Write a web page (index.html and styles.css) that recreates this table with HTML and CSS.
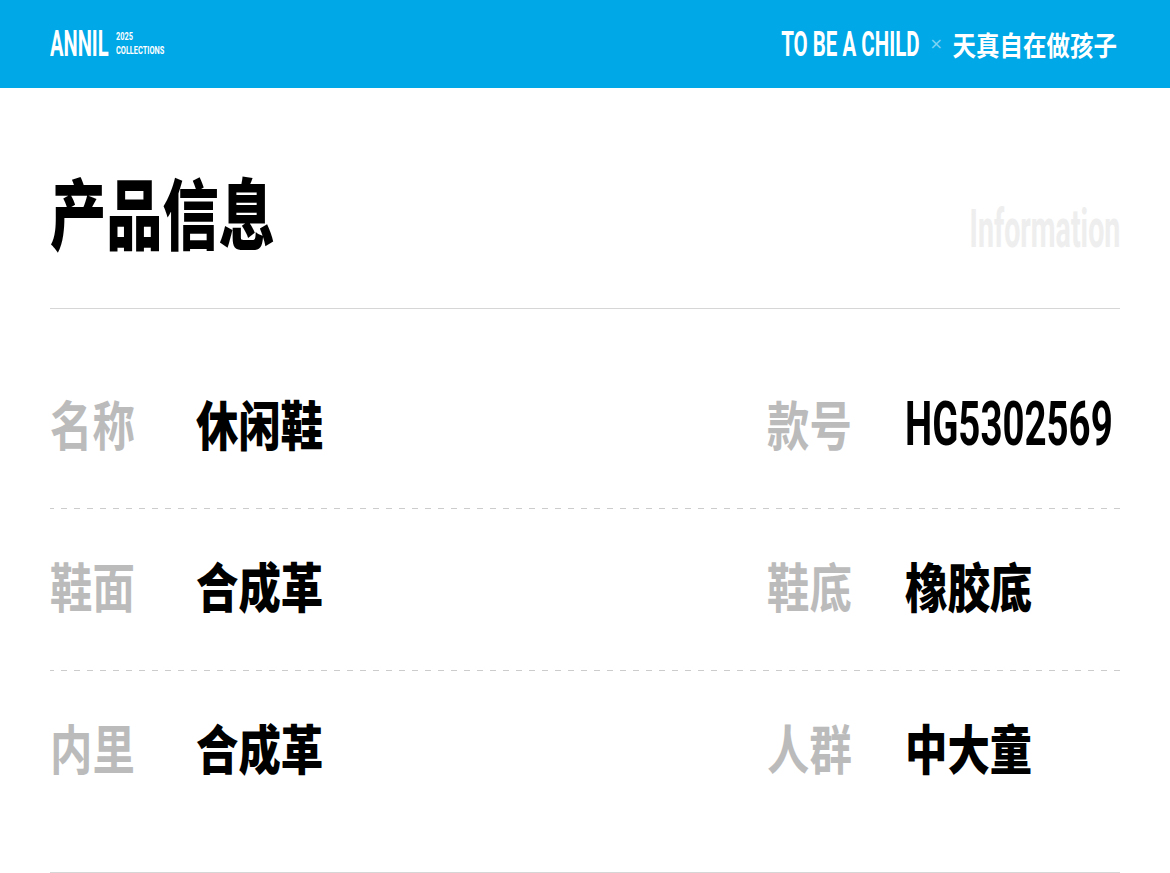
FILE: index.html
```html
<!DOCTYPE html>
<html lang="zh-CN">
<head>
<meta charset="utf-8">
<title>产品信息</title>
<link rel="stylesheet" href="styles.css">
</head>
<body>
<header class="header">
  <div class="brand">
    <span class="brand-name">ANNIL</span>
    <div class="brand-sub">
      <span class="brand-year">2025</span>
      <span class="brand-coll">COLLECTIONS</span>
    </div>
  </div>
  <div class="slogan">
    <span class="slogan-en">TO BE A CHILD</span>
    <span class="slogan-x">×</span>
    <span class="slogan-cn">天真自在做孩子</span>
  </div>
</header>
<main class="main">
  <section class="title-row">
    <h1 class="title"><span class="title-text">产品信息</span></h1>
    <span class="title-en">Information</span>
  </section>
  <section class="specs">
    <div class="row">
      <div class="cell">
        <div class="label"><span class="cjk">名称</span></div>
        <div class="value"><span class="cjk">休闲鞋</span></div>
      </div>
      <div class="cell cell-right">
        <div class="label"><span class="cjk">款号</span></div>
        <div class="value"><span class="code">HG5302569</span></div>
      </div>
    </div>
    <div class="sep"></div>
    <div class="row">
      <div class="cell">
        <div class="label"><span class="cjk">鞋面</span></div>
        <div class="value"><span class="cjk">合成革</span></div>
      </div>
      <div class="cell cell-right">
        <div class="label"><span class="cjk">鞋底</span></div>
        <div class="value"><span class="cjk">橡胶底</span></div>
      </div>
    </div>
    <div class="sep"></div>
    <div class="row">
      <div class="cell">
        <div class="label"><span class="cjk">内里</span></div>
        <div class="value"><span class="cjk">合成革</span></div>
      </div>
      <div class="cell cell-right">
        <div class="label"><span class="cjk">人群</span></div>
        <div class="value"><span class="cjk">中大童</span></div>
      </div>
    </div>
  </section>
</main>
</body>
</html>
```

FILE: styles.css
```css
* { box-sizing: border-box; }
html, body { margin: 0; padding: 0; }
body {
  width: 1170px;
  background: #ffffff;
  font-family: Roboto, "Noto Sans CJK SC", sans-serif;
  color: #000;
  overflow: hidden;
}

.header {
  height: 88px;
  background: #00a8e7;
  padding: 0 50px;
  display: flex;
  align-items: center;
  justify-content: space-between;
  color: #fff;
}
.brand { display: flex; align-items: center; }
.brand-name {
  display: inline-block;
  font-family: Roboto, sans-serif;
  font-weight: 700;
  font-size: 36.5px;
  line-height: 1;
  transform: scaleX(0.55);
  transform-origin: left center;
  margin-right: -40px;
}
.brand-sub {
  display: flex;
  flex-direction: column;
  gap: 3px;
  margin-top: -1px;
}
.brand-year, .brand-coll {
  display: inline-block;
  font-family: Roboto, sans-serif;
  font-weight: 700;
  font-size: 11.5px;
  line-height: 1;
  transform: scaleX(0.64);
  transform-origin: left center;
}
.slogan { display: flex; align-items: center; margin-right: 3px; }
.slogan-en {
  display: inline-block;
  font-family: Roboto, sans-serif;
  font-weight: 700;
  font-size: 35px;
  line-height: 1;
  transform: scaleX(0.585);
  transform-origin: right center;
}
.slogan-x {
  font-family: "DejaVu Sans", sans-serif;
  font-size: 16px;
  line-height: 1;
  color: rgba(255,255,255,0.5);
  margin: 0 10px 0 10px;
}
.slogan-cn {
  display: inline-block;
  font-family: "Noto Sans CJK SC", sans-serif;
  font-weight: 700;
  font-size: 27px;
  line-height: 1;
  transform: scaleX(0.87);
  transform-origin: right center;
  margin-left: -25px;
}

.main { padding: 0 50px; }

.title-row {
  height: 221px;
  padding-top: 24px;
  border-bottom: 1px solid #d6d6d6;
  display: flex;
  align-items: center;
  justify-content: space-between;
}
.title { margin: 0; font-size: 0; }
.title-text {
  display: inline-block;
  font-family: "Noto Sans CJK SC", sans-serif;
  font-weight: 900;
  font-size: 77px;
  line-height: 1;
  transform: scaleX(0.73);
  transform-origin: left center;
}
.title-en {
  display: inline-block;
  font-family: Roboto, sans-serif;
  font-weight: 700;
  font-size: 53px;
  line-height: 1;
  color: #eeeeee;
  transform: scaleX(0.54);
  transform-origin: right center;
  margin-top: 38px;
}

.specs { padding: 38px 0 40px; border-bottom: 1px solid #d6d6d6; }
.row {
  height: 161px;
  padding-bottom: 8px;
  display: grid;
  grid-template-columns: 717px 1fr;
}
.sep {
  height: 1px;
  background-image: repeating-linear-gradient(to right, #cccccc 0 6px, transparent 6px 13px);
  background-position: -2px 0;
}
.cell { display: flex; align-items: center; min-width: 0; }
.label { width: 146px; flex: none; }
.cell-right .label { width: 138px; }
.cjk {
  display: inline-block;
  font-family: "Noto Sans CJK SC", sans-serif;
  font-size: 53px;
  line-height: 1;
  transform: scaleX(0.8);
  transform-origin: left center;
}
.label .cjk { color: #bbbbbb; font-weight: 700; }
.value .cjk { color: #000; font-weight: 900; }
.code {
  display: inline-block;
  font-family: Roboto, sans-serif;
  font-weight: 700;
  font-size: 62px;
  line-height: 1;
  transform: scaleX(0.62);
  transform-origin: left center;
  margin-right: -130px;
}
```
